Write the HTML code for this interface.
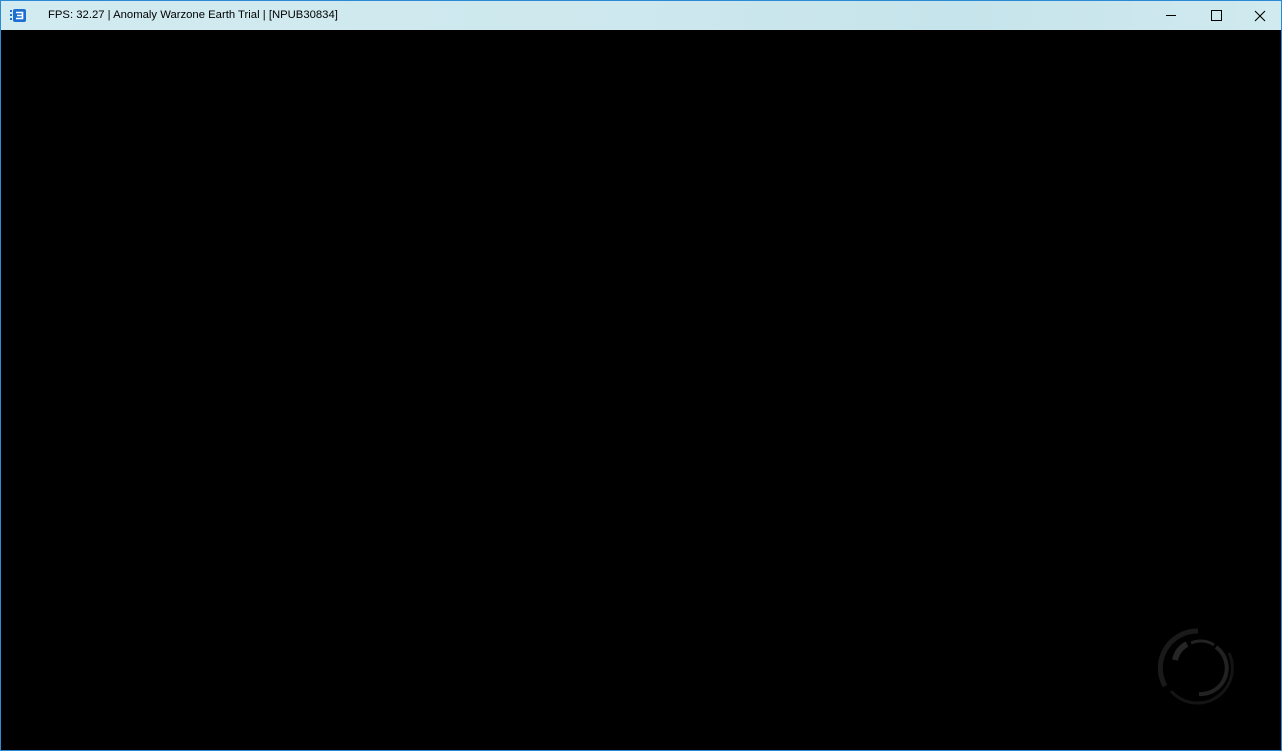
<!DOCTYPE html>
<html><head><meta charset="utf-8"><style>
html,body{margin:0;padding:0;width:1282px;height:751px;overflow:hidden;background:#000;}
.win{position:absolute;left:0;top:0;width:1280px;height:749px;border:1px solid #2b8ad6;background:#000;}
.tb{position:absolute;left:0;top:0;width:1280px;height:29px;background:linear-gradient(90deg,#d2ebf0 0%,#cde8ee 50%,#c6e4eb 75%,#d0eaef 100%);}
.title{position:absolute;left:47px;top:8px;font:11.3px "Liberation Sans",sans-serif;color:#000;}
.icon{position:absolute;left:9px;top:8px;width:16px;height:13px;}
.ctl{position:absolute;top:0;height:29px;width:46px;}
</style></head><body>
<div class="win">
<div class="tb">
<svg class="icon" viewBox="0 0 16 13"><rect x="3" y="0" width="13" height="13" rx="2" fill="#1f6fd1"/><rect x="0" y="1" width="2" height="2" fill="#1f6fd1"/><rect x="0" y="5" width="2" height="2" fill="#1f6fd1"/><rect x="0" y="9" width="2" height="2" fill="#1f6fd1"/><path d="M6 3.5h6.5v6H6M7 6.5h5.5" stroke="#fff" stroke-width="1.6" fill="none"/></svg>
<div class="title">FPS: 32.27 | Anomaly Warzone Earth Trial | [NPUB30834]</div>
<svg class="ctl" style="left:1147px" viewBox="0 0 46 29"><path d="M18 14.5h10" stroke="#000" stroke-width="1"/></svg>
<svg class="ctl" style="left:1193px" viewBox="0 0 46 29"><rect x="17.5" y="9.5" width="10" height="10" stroke="#000" fill="none"/></svg>
<svg class="ctl" style="left:1236px" viewBox="0 0 46 29"><path d="M18 10l10 10M28 10l-10 10" stroke="#000" stroke-width="1.1"/></svg>
</div>
<svg style="position:absolute;left:1150px;top:620px" width="95" height="95" viewBox="0 0 95 95">
<path d="M47 10 A37 37 0 0 0 14 65" stroke="#1a1a1a" stroke-width="5" fill="none"/>
<path d="M24 39 A24 24 0 0 1 36 23" stroke="#262626" stroke-width="6" fill="none"/>
<path d="M40 22 A24 24 0 0 1 63 24" stroke="#222" stroke-width="3" fill="none"/>
<path d="M65 26 A26 26 0 0 1 48 73" stroke="#222" stroke-width="4" fill="none"/>
<path d="M78 32 A35 35 0 0 1 48 82 A35 35 0 0 1 20 70" stroke="#141414" stroke-width="3" fill="none"/>
</svg>
</div>
</body></html>
